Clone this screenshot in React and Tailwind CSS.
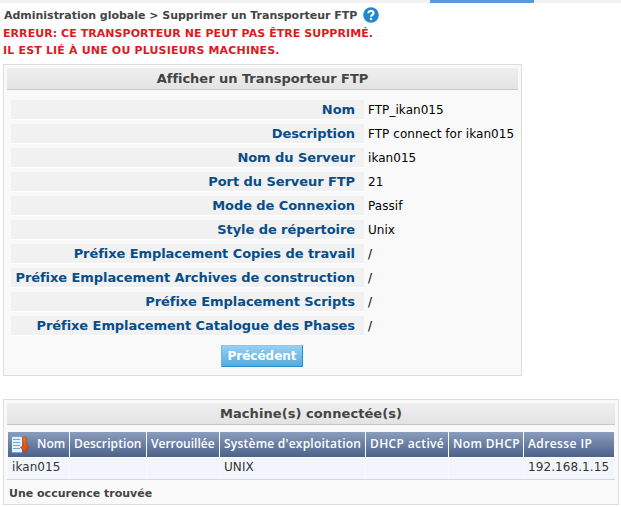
const fields = [
  ['Nom', 'FTP_ikan015'],
  ['Description', 'FTP connect for ikan015'],
  ['Nom du Serveur', 'ikan015'],
  ['Port du Serveur FTP', '21'],
  ['Mode de Connexion', 'Passif'],
  ['Style de répertoire', 'Unix'],
  ['Préfixe Emplacement Copies de travail', '/'],
  ['Préfixe Emplacement Archives de construction', '/'],
  ['Préfixe Emplacement Scripts', '/'],
  ['Préfixe Emplacement Catalogue des Phases', '/'],
];

const columns = [
  { title: 'Nom', value: 'ikan015', sorted: true, tracking: 'tracking-normal' },
  { title: 'Description', value: '', tracking: 'tracking-[0.09px]' },
  { title: 'Verrouillée', value: '', tracking: 'tracking-normal' },
  { title: "Système d'exploitation", value: 'UNIX', tracking: 'tracking-[0.23px]' },
  { title: 'DHCP activé', value: '', tracking: 'tracking-[0.35px]' },
  { title: 'Nom DHCP', value: '', tracking: 'tracking-[0.35px]' },
  { title: 'Adresse IP', value: '192.168.1.15', tracking: 'tracking-[0.4px]' },
];

const grid = 'grid grid-cols-[61px_76px_72px_145px_82px_74px_90px] gap-px';

function HelpIcon() {
  return (
    <svg className="ml-[6px] size-4 shrink-0" viewBox="0 0 16 16">
      <circle cx="8" cy="8" r="7.8" fill="#2385cb" />
      <path d="M5.3 6.2C5.3 3.2 10.6 3.2 10.6 6C10.6 7.9 8.1 7.8 8 9.8" fill="none" stroke="#fff" strokeWidth="2.1" />
      <circle cx="8" cy="12" r="1.25" fill="#fff" />
    </svg>
  );
}

function SortIcon() {
  return (
    <svg className="ml-1 h-[19px] w-[18px] shrink-0" viewBox="0 0 18 19">
      <defs>
        <linearGradient id="arrow" x1="0" y1="0" x2="0" y2="1">
          <stop offset="0" stopColor="#e87c08" />
          <stop offset="1" stopColor="#d8401a" />
        </linearGradient>
      </defs>
      <path d="M0 1H10V18H0Z" fill="#e4f1fc" />
      <path d="M0 1.5H10M1 4.5H8M1 7.5H8M1 10.5H8M1 13.5H8M0 17.5H10" stroke="#6fa8de" strokeWidth="1" />
      <path d="M10.5 2.5Q12.5 1.2 14.5 2.5L15 11.5H17L12.8 18L8.3 12L11 11.5Z" fill="url(#arrow)" stroke="#b53410" strokeWidth=".5" />
    </svg>
  );
}

function PanelTitle({ children }) {
  return (
    <h2 className="h-[22px] border-b border-[#c8c8c8] bg-linear-to-b from-[#efefef] to-[#e3e3e3] text-center text-[13px] leading-[21px] font-bold text-[#444]">
      {children}
    </h2>
  );
}

export default function App() {
  return (
    <div className="h-[507px] w-[621px] overflow-hidden bg-white font-['Verdana','DejaVu_Sans',sans-serif] text-[12px]">
      <div className="h-[3px] bg-[#f2f2f2] pl-[430px]">
        <div className="h-full w-[104px] bg-[#5b9bd5]" />
      </div>
      <div className="flex h-[22px] items-center pt-[2px] pl-1 text-[11px] font-bold tracking-[-0.02px] whitespace-nowrap text-[#444]">
        <span className="pt-[2px]">Administration globale &gt; Supprimer un Transporteur FTP</span>
        <HelpIcon />
      </div>
      <div className="h-[39px] pl-[3px] text-[11px] leading-[17px] font-bold whitespace-nowrap text-[#dd1a22]">
        <p className="tracking-[0.06px]">ERREUR: CE TRANSPORTEUR NE PEUT PAS ÊTRE SUPPRIMÉ.</p>
        <p className="tracking-[0.17px]">IL EST LIÉ À UNE OU PLUSIEURS MACHINES.</p>
      </div>

      <section className="ml-[3px] h-[312px] w-[519px] border border-[#ddd] bg-[#f9f9f9] p-[3px]">
        <PanelTitle>
          <span className="tracking-[-0.03px]">Afficher un Transporteur FTP</span>
        </PanelTitle>
        <dl className="flex flex-col gap-1 pt-[10px] pl-1">
          {fields.map(([label, value]) => (
            <div key={label} className="flex h-5 whitespace-nowrap">
              <dt className="h-5 w-[353px] border-b border-white bg-[#f1f1f1] pr-[9px] text-right text-[13px] leading-[19px] font-bold tracking-[-0.07px] text-[#0a4d85]">
                {label}
              </dt>
              <dd className="pl-1 leading-5 tracking-[0.05px] text-black">{value}</dd>
            </div>
          ))}
        </dl>
        <button className="mt-[9px] ml-[214px] block h-[22px] w-[82px] border border-t-[#8bc8ee] border-r-[#2b8ccc] border-b-[#2b8ccc] border-l-[#6bb8e6] bg-linear-to-b from-[#98cff1] to-[#4eade2] text-[12px] leading-5 font-bold text-white">
          Précédent
        </button>
      </section>

      <section className="mt-[23px] ml-[3px] h-[106px] w-[616px] border border-[#ddd] bg-[#f9f9f9] p-[3px]">
        <PanelTitle>
          <span className="tracking-[0.07px]">Machine(s) connectée(s)</span>
        </PanelTitle>
        <div className="mt-[7px] border-b border-[#d8d8d8] px-px whitespace-nowrap">
          <div className={grid}>
            {columns.map((c) => (
              <div key={c.title} className="flex h-[25px] items-center bg-linear-to-b from-[#8a9dbd] to-[#4c6289] font-['Open_Sans',sans-serif] text-[12px] font-semibold text-white">
                {c.sorted && <SortIcon />}
                <span className={`pb-[2px] ${c.tracking} ${c.sorted ? 'ml-[7px]' : 'ml-1'}`}>{c.title}</span>
              </div>
            ))}
          </div>
          <div className={grid}>
            {columns.map((c) => (
              <div key={c.title} className="h-[22px] border-t border-white bg-[#f2f6fc] pl-1 leading-[19px] tracking-[0.08px] text-[#333]">
                {c.value}
              </div>
            ))}
          </div>
        </div>
        <p className="pt-[6px] pl-[2px] text-[11px] leading-4 font-bold text-[#444]">Une occurence trouvée</p>
      </section>
    </div>
  );
}
